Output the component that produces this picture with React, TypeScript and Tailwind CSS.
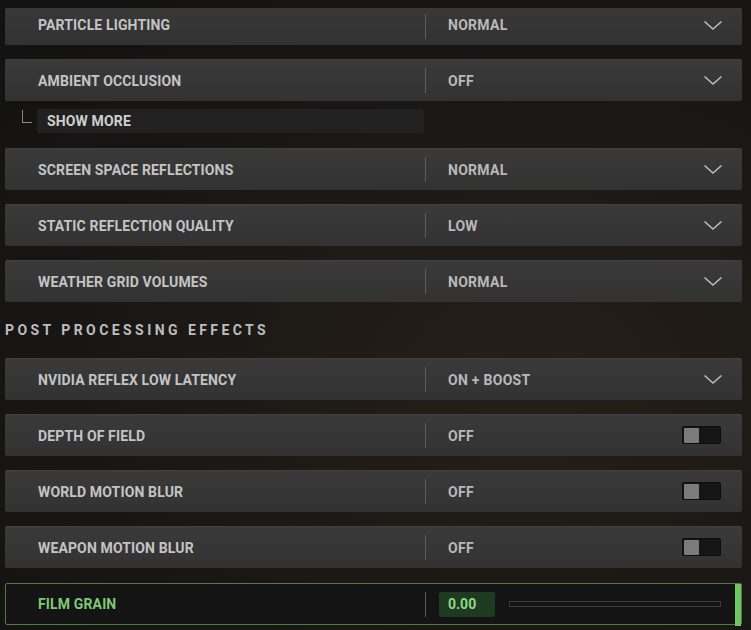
import { ReactNode } from 'react';

type Kind = 'select' | 'toggle';

function Chevron() {
  return (
    <svg width="20" height="11" viewBox="0 0 20 11" fill="none" className="text-[#bdbdbd]">
      <polyline points="1.5,1.5 10,9 18.5,1.5" stroke="currentColor" strokeWidth="1.6" />
    </svg>
  );
}

function Toggle() {
  return (
    <div className="flex h-[18px] w-[39px] items-center rounded-[2px] border border-[#0c0c0c] bg-[#161616] pl-px">
      <div className="h-[15px] w-[15px] rounded-[1px] bg-[#7b7b7b]" />
    </div>
  );
}

function Row({
  label,
  value,
  kind = 'select',
  className = '',
}: {
  label: string;
  value: string;
  kind?: Kind;
  className?: string;
}) {
  return (
    <div
      className={`flex h-[42px] shrink-0 items-center rounded-[2px] bg-gradient-to-b from-[#3a3a3a] to-[#323232] shadow-[inset_0_1px_0_rgba(255,255,255,0.04)] ${className}`}
    >
      <div className="w-[420px] pl-[33px] pt-[2px] text-[14px] font-bold tracking-[0.01em] text-[#c4c4c4]">{label}</div>
      <div className="h-[25px] w-px bg-[#5e5e5e]" />
      <div className="flex-1 pl-[22px] pt-[2px] text-[14px] font-bold tracking-[0.02em] text-[#b9b9b9]">{value}</div>
      <div className={kind === 'select' ? 'pr-[19px]' : 'pr-[21px]'}>
        {kind === 'select' ? <Chevron /> : <Toggle />}
      </div>
    </div>
  );
}

function SectionTitle({ children }: { children: ReactNode }) {
  return (
    <div className="flex h-[56px] shrink-0 items-center pt-px text-[14px] font-bold tracking-[0.245em] text-[#bdbdbd]">
      {children}
    </div>
  );
}

export default function App() {
  return (
    <div
      className="h-[630px] w-[751px] overflow-hidden bg-[radial-gradient(ellipse_at_70%_60%,#261f19_0%,#1b1815_45%,#121212_100%)] pl-[5px] pr-[9px]"
      style={{ fontFamily: 'Roboto, "Liberation Sans", sans-serif' }}
    >
      <div className="flex flex-col">
        {/* first row is cut at the top of the view */}
        <div className="mt-[8px] flex h-[37px] shrink-0 items-center rounded-[2px] bg-gradient-to-b from-[#383838] to-[#323232] pb-[3px]">
          <div className="w-[420px] pl-[33px] text-[14px] font-bold tracking-[0.01em] text-[#c4c4c4]">PARTICLE LIGHTING</div>
          <div className="mb-[-3px] h-[25px] w-px bg-[#5e5e5e]" />
          <div className="flex-1 pl-[22px] text-[14px] font-bold tracking-[0.02em] text-[#b9b9b9]">NORMAL</div>
          <div className="pr-[19px]">
            <Chevron />
          </div>
        </div>

        <Row className="mt-[14px]" label="AMBIENT OCCLUSION" value="OFF" />

        <div className="mt-[8px] flex h-[24px] shrink-0 items-start">
          <div className="ml-[17px] mt-px h-[13px] w-[10px] border-b border-l border-[#8a8a8a]" />
          <div className="ml-[5px] flex h-[24px] w-[387px] items-center rounded-[2px] bg-[#212121] pl-[10px] pt-px text-[14px] font-bold tracking-[0.01em] text-[#cfcfcf]">
            SHOW MORE
          </div>
        </div>

        <Row className="mt-[15px]" label="SCREEN SPACE REFLECTIONS" value="NORMAL" />
        <Row className="mt-[14px]" label="STATIC REFLECTION QUALITY" value="LOW" />
        <Row className="mt-[14px]" label="WEATHER GRID VOLUMES" value="NORMAL" />

        <SectionTitle>POST PROCESSING EFFECTS</SectionTitle>

        <Row label="NVIDIA REFLEX LOW LATENCY" value="ON + BOOST" />
        <Row className="mt-[14px]" label="DEPTH OF FIELD" value="OFF" kind="toggle" />
        <Row className="mt-[14px]" label="WORLD MOTION BLUR" value="OFF" kind="toggle" />
        <Row className="mt-[14px]" label="WEAPON MOTION BLUR" value="OFF" kind="toggle" />

        <div className="mt-[15px] flex h-[42px] shrink-0 items-center rounded-[2px] border border-[#4d7a48] bg-[#151414]">
          <div className="w-[419px] pl-[32px] pt-px text-[14px] font-bold tracking-[0.01em] text-[#7ec877]">FILM GRAIN</div>
          <div className="h-[25px] w-px bg-[#5a5a5a]" />
          <div className="ml-[13px] flex h-[25px] w-[56px] items-center rounded-[2px] bg-[#1e3a21] pl-[9px] pt-px text-[14px] font-bold text-[#8fd78a]">
            0.00
          </div>
          <div className="ml-[14px] h-[6px] flex-1 border border-[#3b3b3b] bg-[#141414]" />
          <div className="ml-[14px] h-[42px] w-[6px] self-stretch bg-[#6fc463]" />
        </div>
      </div>
    </div>
  );
}
